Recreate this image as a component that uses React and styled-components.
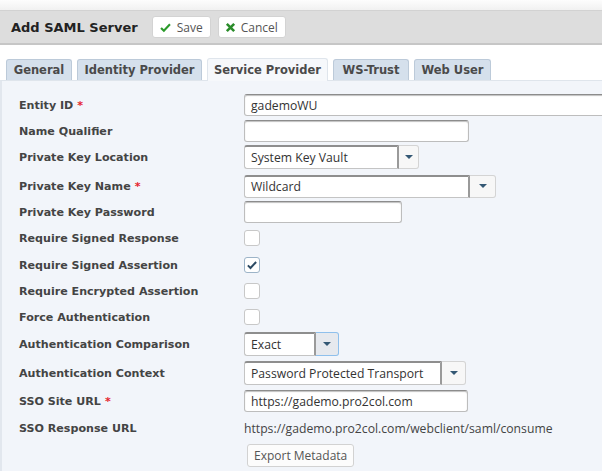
import React from 'react';
import styled, { createGlobalStyle } from 'styled-components';

const GlobalStyle = createGlobalStyle`
  body {
    margin: 0;
    background: #fff;
  }
`;

const Page = styled.div`
  width: 602px;
  height: 471px;
  overflow: hidden;
  background: #fff;
  font-family: "DejaVu Sans", Verdana, sans-serif;
`;

const TopStrip = styled.div`
  height: 10px;
  background: linear-gradient(#fdfdfd, #f1f1f1);
`;

const Header = styled.div`
  height: 32px;
  display: flex;
  align-items: center;
  padding-left: 11px;
  background: #dddddd;
  border-top: 1px solid #d2d2d2;
  border-bottom: 2px solid #c6c6c6;
`;

const Title = styled.h1`
  margin: 0 14px 0 0;
  font-size: 13px;
  font-weight: bold;
  color: #222;
`;

const ToolButton = styled.button`
  height: 22px;
  display: flex;
  align-items: center;
  gap: 5px;
  margin-right: 7px;
  padding: 0 7px 0 6px;
  background: #fff;
  border: 1px solid #d3d3d3;
  border-radius: 3px;
  font-family: "Open Sans", sans-serif;
  font-size: 12px;
  color: #555;
`;

const TabBar = styled.div`
  display: flex;
  gap: 5px;
  margin-top: 13px;
  padding-left: 6px;
  height: 22px;
  align-items: flex-end;
`;

const Tab = styled.div`
  height: ${p => (p.$active ? 23 : 21)}px;
  margin-bottom: ${p => (p.$active ? -1 : 0)}px;
  width: ${p => p.$w}px;
  box-sizing: border-box;
  display: flex;
  align-items: center;
  justify-content: center;
  border: 1px solid ${p => (p.$active ? '#dfe5ec' : '#bccad9')};
  border-bottom: none;
  border-radius: 3px 3px 0 0;
  background: ${p => (p.$active ? '#f6f8fb' : '#d5e0ec')};
  font-size: 11.5px;
  font-weight: bold;
  color: #4a4a4a;
  position: relative;
  z-index: ${p => (p.$active ? 1 : 0)};
`;

const Panel = styled.div`
  height: 400px;
  background: #f2f5fa;
  border-top: 1px solid #dfe5ec;
  border-left: 2px solid #e2e7ee;
  padding: 11px 0 0 17px;
`;

const Row = styled.div`
  display: flex;
  align-items: center;
  height: 26px;
  margin-top: ${p => p.$mt || 0}px;
`;

const Label = styled.div`
  width: 225px;
  flex: none;
  font-size: 11.1px;
  font-weight: bold;
  color: #444;
`;

const Star = styled.span`
  color: #e5262e;
  margin-left: 4px;
`;

const TextInput = styled.div`
  width: ${p => p.$w}px;
  height: 22px;
  box-sizing: border-box;
  flex: none;
  display: flex;
  align-items: center;
  padding: 0 6px;
  background: #fff;
  border: 1px solid #bdbdbd;
  border-top-color: #8c8c8c;
  border-radius: 3px;
  box-shadow: inset 0 1px 1px rgba(0, 0, 0, 0.25);
  font-family: "Open Sans", sans-serif;
  font-size: 12.2px;
  color: #333;
`;

const SelectBox = styled.div`
  display: flex;
  height: ${p => p.$h || 24}px;
  flex: none;
`;

const SelectField = styled.div`
  width: ${p => p.$w}px;
  box-sizing: border-box;
  display: flex;
  align-items: center;
  padding: 0 6px;
  background: #fff;
  border: 1px solid #c4c4c4;
  border-top: 2px solid #8e8e8e;
  border-right: 2px solid #9a9a9a;
  border-radius: 3px 0 0 3px;
  font-family: "Open Sans", sans-serif;
  font-size: 12.2px;
  color: #333;
`;

const SelectButton = styled.div`
  width: ${p => p.$w}px;
  box-sizing: border-box;
  display: flex;
  align-items: center;
  justify-content: center;
  background: ${p => (p.$focus ? '#e6e9ee' : '#f7f7f7')};
  border: 1px solid ${p => (p.$focus ? '#8fc0ec' : '#d4d4d4')};
  border-left: none;
  border-radius: 0 3px 3px 0;

  &::after {
    content: '';
    border-left: 4px solid transparent;
    border-right: 4px solid transparent;
    border-top: 4px solid #345874;
  }
`;

const Check = styled.div`
  width: 16px;
  height: 16px;
  box-sizing: border-box;
  display: flex;
  align-items: center;
  justify-content: center;
  background: #fff;
  border: 1px solid ${p => (p.$on ? '#9db4c8' : '#c8c8c8')};
  border-radius: 3px;
`;

const Value = styled.div`
  font-family: "Open Sans", sans-serif;
  font-size: 12.2px;
  color: #444;
  white-space: nowrap;
`;

const ExportButton = styled.button`
  margin: 3px 0 0 228px;
  height: 23px;
  padding: 0 6px;
  white-space: nowrap;
  background: #fcfcfc;
  border: 1px solid #d2d2d2;
  border-radius: 3px;
  font-family: "Open Sans", sans-serif;
  font-size: 12px;
  color: #555;
`;

const CheckIcon = ({ color, size }) => (
  <svg width={size} height={size} viewBox="0 0 16 16">
    <path d="M2.5 8.5 L6 12 L13.5 4" fill="none" stroke={color} strokeWidth="2.6" />
  </svg>
);

const CrossIcon = () => (
  <svg width="11" height="11" viewBox="0 0 12 12">
    <path d="M2 2 L10 10 M10 2 L2 10" fill="none" stroke="#2a8c2a" strokeWidth="2.8" />
  </svg>
);

const Select = ({ value, field, button, h, focus }) => (
  <SelectBox $h={h}>
    <SelectField $w={field}>{value}</SelectField>
    <SelectButton $w={button} $focus={focus} />
  </SelectBox>
);

const Field = ({ label, required, children, mt }) => (
  <Row $mt={mt}>
    <Label>
      {label}
      {required && <Star>*</Star>}
    </Label>
    {children}
  </Row>
);

const tabs = [
  { name: 'General', w: 66 },
  { name: 'Identity Provider', w: 125 },
  { name: 'Service Provider', w: 121, active: true },
  { name: 'WS-Trust', w: 76 },
  { name: 'Web User', w: 77 },
];

export default function App() {
  return (
    <Page>
      <GlobalStyle />
      <TopStrip />
      <Header>
        <Title>Add SAML Server</Title>
        <ToolButton>
          <CheckIcon color="#2a9a2a" size={13} />
          Save
        </ToolButton>
        <ToolButton>
          <CrossIcon />
          Cancel
        </ToolButton>
      </Header>
      <TabBar>
        {tabs.map(t => (
          <Tab key={t.name} $w={t.w} $active={t.active}>
            {t.name}
          </Tab>
        ))}
      </TabBar>
      <Panel>
        <Field label="Entity ID" required>
          <TextInput $w={380}>gademoWU</TextInput>
        </Field>
        <Field label="Name Qualifier">
          <TextInput $w={225} />
        </Field>
        <Field label="Private Key Location">
          <Select value="System Key Vault" field={155} button={20} />
        </Field>
        <Field label="Private Key Name" required mt={3}>
          <Select value="Wildcard" field={226} button={26} h={23} />
        </Field>
        <Field label="Private Key Password">
          <TextInput $w={158} />
        </Field>
        <Field label="Require Signed Response">
          <Check />
        </Field>
        <Field label="Require Signed Assertion" mt={1}>
          <Check $on>
            <CheckIcon color="#2c4a63" size={12} />
          </Check>
        </Field>
        <Field label="Require Encrypted Assertion">
          <Check />
        </Field>
        <Field label="Force Authentication">
          <Check />
        </Field>
        <Field label="Authentication Comparison" mt={1}>
          <Select value="Exact" field={72} button={23} focus />
        </Field>
        <Field label="Authentication Context" mt={3}>
          <Select value="Password Protected Transport" field={198} button={24} />
        </Field>
        <Field label="SSO Site URL" required mt={2}>
          <TextInput $w={224}>https://gademo.pro2col.com</TextInput>
        </Field>
        <Field label="SSO Response URL" mt={1}>
          <Value>https://gademo.pro2col.com/webclient/saml/consume</Value>
        </Field>
        <ExportButton>Export Metadata</ExportButton>
      </Panel>
    </Page>
  );
}
